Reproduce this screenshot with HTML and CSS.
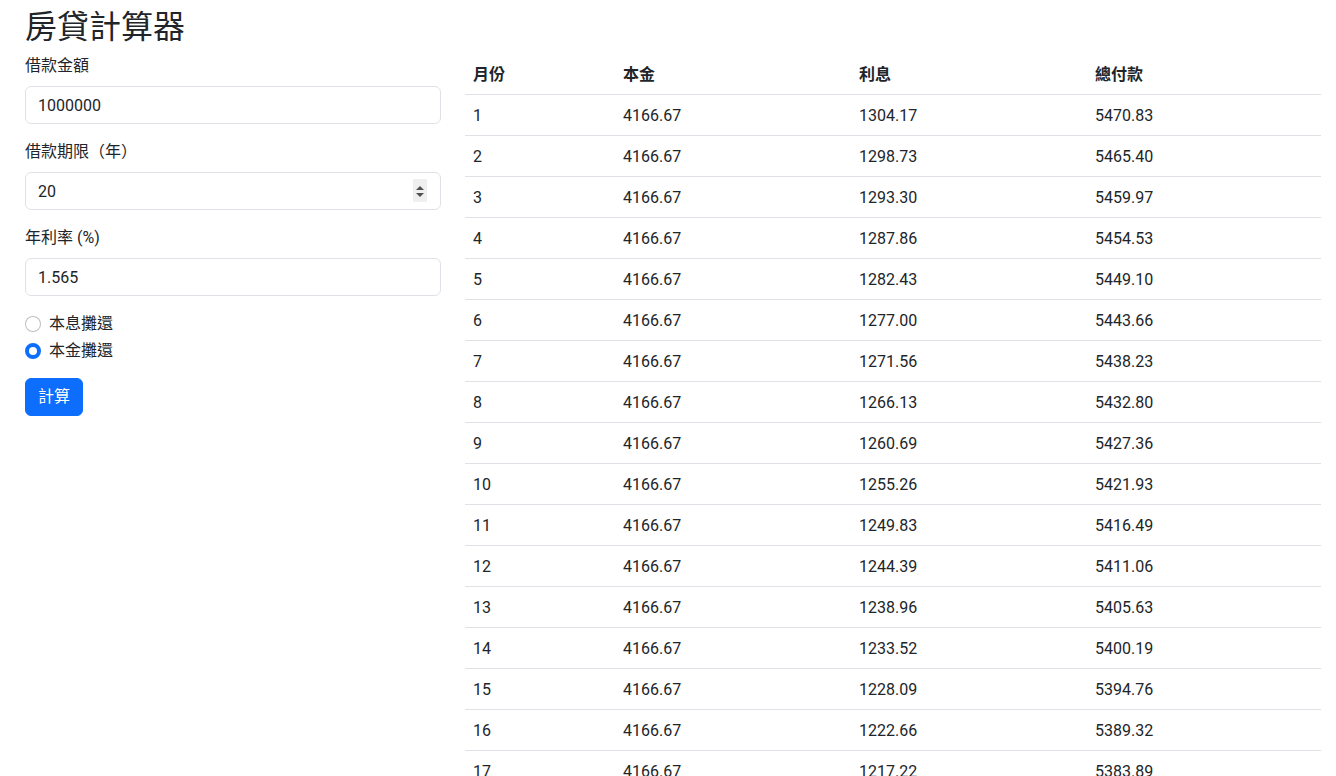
FILE: index.html
```html
<!DOCTYPE html>
<html lang="zh-Hant">
<head>
<meta charset="utf-8">
<title>房貸計算器</title>
<link rel="stylesheet" href="styles.css">
</head>
<body>
<div class="page">
  <h2 class="title">房貸計算器</h2>
  <div class="layout">
    <form class="calc-form" id="calcForm">
      <div class="field">
        <label class="field-label" for="amount">借款金額</label>
        <input class="field-input" type="text" id="amount" value="1000000">
      </div>
      <div class="field">
        <label class="field-label" for="years">借款期限（年）</label>
        <div class="number-wrap">
          <input class="field-input number-input" type="number" id="years" value="20">
          <span class="spinner" aria-hidden="true">
            <svg width="14" height="23" viewBox="0 0 14 23"><path d="M3 11 L7 7 L11 11 Z" fill="#505050"/><path d="M3 14 L7 18 L11 14 Z" fill="#505050"/></svg>
          </span>
        </div>
      </div>
      <div class="field">
        <label class="field-label" for="rate">年利率 (%)</label>
        <input class="field-input" type="text" id="rate" value="1.565">
      </div>
      <div class="checks">
        <label class="check"><input class="check-input" type="radio" name="method" value="equal"><span>本息攤還</span></label>
        <label class="check"><input class="check-input" type="radio" name="method" value="principal" checked><span>本金攤還</span></label>
      </div>
      <button class="btn-primary" type="submit">計算</button>
    </form>
    <div class="results">
      <table class="schedule">
        <thead>
          <tr><th class="c1">月份</th><th class="c2">本金</th><th class="c3">利息</th><th class="c4">總付款</th></tr>
        </thead>
        <tbody id="scheduleBody"></tbody>
      </table>
    </div>
  </div>
</div>
<script src="script.js"></script>
</body>
</html>
```
FILE: styles.css
```css
* { box-sizing: border-box; }
html, body { margin: 0; padding: 0; }
body {
  font-family: Roboto, "Noto Sans CJK TC", sans-serif;
  font-size: 16px;
  line-height: 1.5;
  color: #212529;
  background: #fff;
}
.page {
  padding: 8px 0 0 25px;
}
.title {
  margin: 0 0 8px 0;
  font-size: 32px;
  font-weight: 400;
  line-height: 1.2;
  color: #212529;
}
.layout {
  display: grid;
  grid-template-columns: 416px 856px;
  column-gap: 24px;
  align-items: start;
}
.calc-form { display: flex; flex-direction: column; }
.field { margin-bottom: 16px; }
.field-label {
  display: block;
  margin-bottom: 8px;
  line-height: 24px;
}
.field-input {
  display: block;
  width: 100%;
  height: 38px;
  padding: 6px 12px;
  font-family: inherit;
  font-size: 16px;
  line-height: 1.5;
  color: #212529;
  background: #fff;
  border: 1px solid #dee2e6;
  border-radius: 6px;
  outline: none;
}
.number-wrap { position: relative; }
.number-input { -moz-appearance: textfield; }
.number-input::-webkit-inner-spin-button,
.number-input::-webkit-outer-spin-button {
  -webkit-appearance: none;
  margin: 0;
}
.spinner {
  position: absolute;
  right: 14px;
  top: 7px;
  width: 14px;
  height: 23px;
  background: #efefef;
  display: flex;
  align-items: center;
  justify-content: center;
}
.checks { margin-bottom: 12px; }
.check {
  display: flex;
  align-items: center;
  min-height: 24px;
  margin-bottom: 3px;
}
.check-input {
  appearance: none;
  -webkit-appearance: none;
  width: 16px;
  height: 16px;
  margin: 0 8px 0 0;
  border: 1px solid rgba(0,0,0,.25);
  border-radius: 50%;
  background: #fff;
  flex: none;
}
.check-input:checked {
  background: #fff;
  border: 4px solid #0d6efd;
}
.btn-primary {
  align-self: flex-start;
  height: 38px;
  padding: 6px 12px;
  font-family: inherit;
  font-size: 16px;
  line-height: 1.5;
  color: #fff;
  background: #0d6efd;
  border: 1px solid #0d6efd;
  border-radius: 6px;
}
.schedule {
  width: 100%;
  border-collapse: collapse;
  table-layout: fixed;
}
.schedule th, .schedule td {
  padding: 9px 8px 7px;
  text-align: left;
  border-bottom: 1px solid #dee2e6;
  line-height: 24px;
}
.schedule th { font-weight: 700; }
.c1 { width: 150px; }
.c2 { width: 236px; }
.c3 { width: 236px; }
```
FILE: script.js
```js
(function () {
  var body = document.getElementById('scheduleBody');
  var amount = 1000000, years = 20, rate = 1.565;
  var n = years * 12;
  var principal = amount / n;
  var remaining = amount;
  var r = rate / 100 / 12;
  var html = '';
  for (var i = 1; i <= n; i++) {
    var interest = remaining * r;
    var total = principal + interest;
    html += '<tr><td>' + i + '</td><td>' + principal.toFixed(2) + '</td><td>' + interest.toFixed(2) + '</td><td>' + total.toFixed(2) + '</td></tr>';
    remaining -= principal;
  }
  body.innerHTML = html;
})();
```
